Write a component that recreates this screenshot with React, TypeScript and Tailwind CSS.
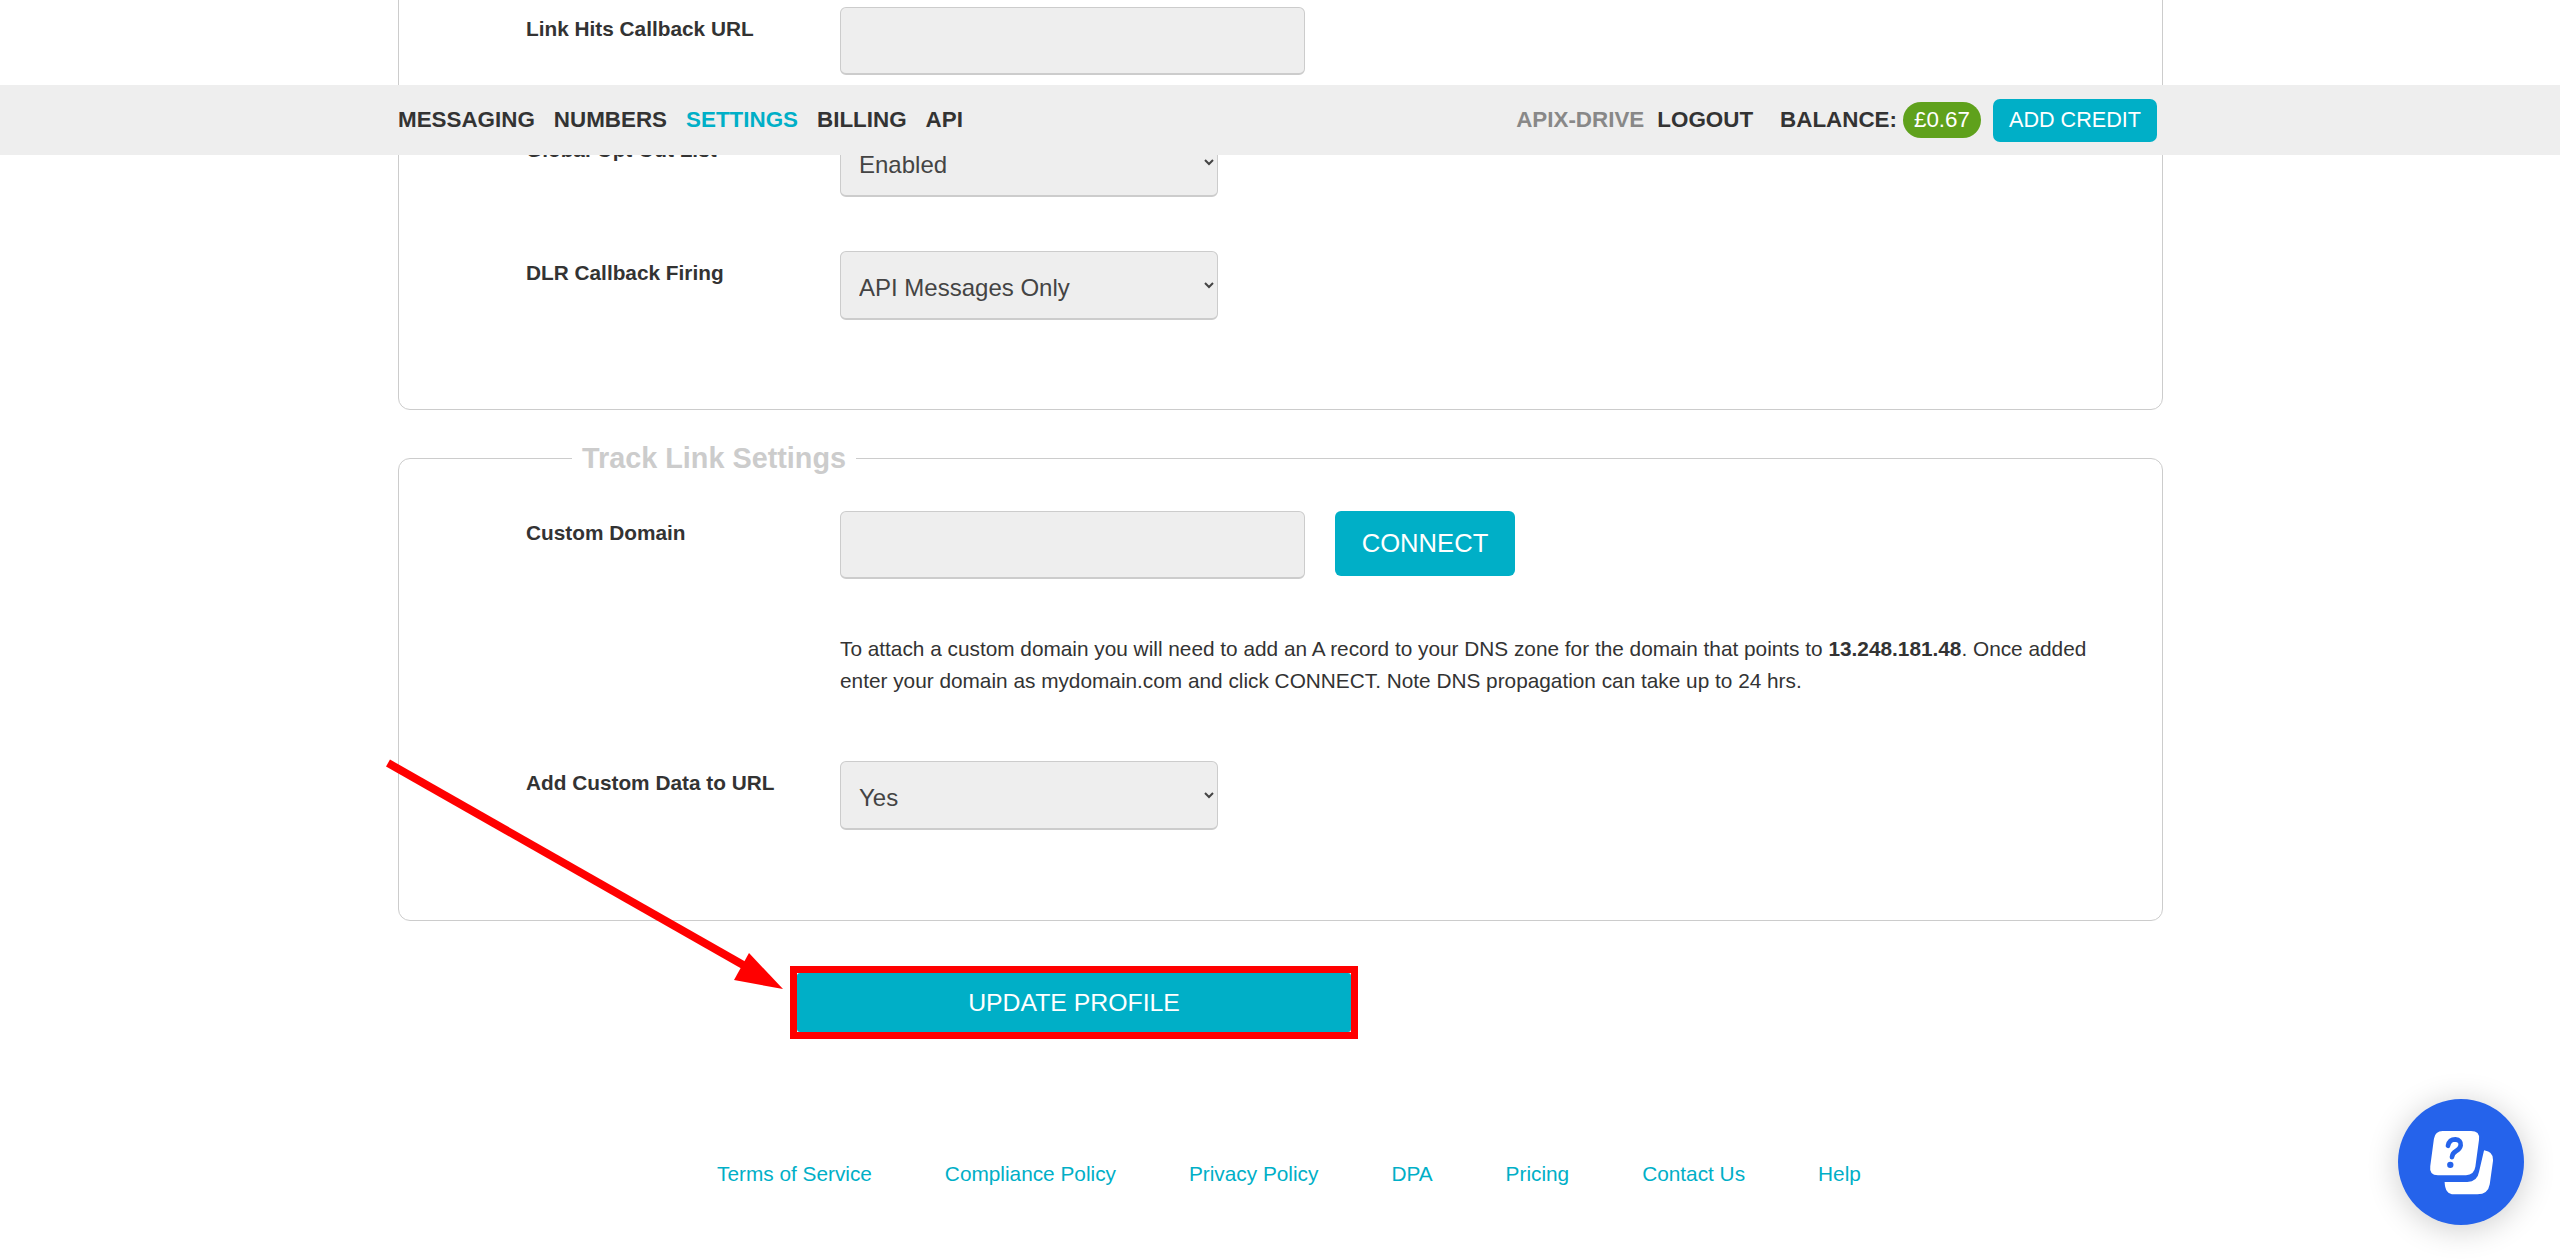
import React from "react";

const labelCls = "w-[314px] shrink-0 mt-[10px] text-[20.8px] leading-[24px] font-bold text-[#333333]";
const inputCls = "w-[465px] h-[68px] shrink-0 bg-[#eeeeee] border border-[#cccccc] border-b-2 rounded-[6px]";
const selectCls = "w-[378px] h-[69px] shrink-0 bg-[#eeeeee] border border-[#cccccc] border-b-2 rounded-[6px] pl-[14px] pr-[8px] pt-[4px] text-[24px] text-[#444444]";

function Chat() {
  return (
    <div className="fixed left-[2398px] top-[1099px] z-30 w-[126px] h-[126px] rounded-full bg-[#2563eb] shadow-[0_4px_32px_rgba(0,0,0,0.2)]">
      <svg width="126" height="126" viewBox="115 57 376 377">
        <path fill="#ffffff" d="M248 153 L333 153 Q360 153 357 178 L346 260 Q342 285 318 285 L234 285 Q207 285 211 258 L222 176 Q226 153 248 153 Z" />
        <path fill="#ffffff" d="M372 210 Q401 214 399 240 L389 312 Q384 342 352 342 L282 342 Q255 342 254 305 L322 305 Q352 305 357 275 Z" />
        <path fill="none" stroke="#2563eb" strokeWidth="14" strokeLinecap="round" d="M264 197 Q268 178 286 178 Q304 180 302 196 Q300 207 288 213 Q277 219 276 231" />
        <circle cx="271" cy="254" r="9.5" fill="#2563eb" />
      </svg>
    </div>
  );
}

export default function App() {
  return (
    <div className="relative w-[2560px] h-[1260px] overflow-hidden bg-white font-['Liberation_Sans',Arial,sans-serif] text-[#333333]">
      {/* fixed top navigation */}
      <nav className="fixed left-0 top-[85px] z-20 w-full h-[70px] bg-[#eeeeee] pl-[398px] pr-[403px] flex items-center justify-between">
        <div className="flex items-center gap-[19px] text-[22.4px] font-bold">
          <a>MESSAGING</a>
          <a>NUMBERS</a>
          <a className="text-[#00afc7]">SETTINGS</a>
          <a>BILLING</a>
          <a>API</a>
        </div>
        <div className="flex items-center text-[22.4px] font-bold">
          <a className="text-[#888888]">APIX-DRIVE</a>
          <a className="ml-[13px]">LOGOUT</a>
          <span className="ml-[27px]">BALANCE:</span>
          <span className="ml-[6px] w-[78px] h-[36px] rounded-full bg-[#5fa11c] text-white font-normal flex items-center justify-center">£0.67</span>
          <button className="ml-[12px] w-[164px] h-[43px] rounded-[7px] bg-[#00afc7] text-white font-normal text-[21.6px] flex items-center justify-center">ADD CREDIT</button>
        </div>
      </nav>

      <main className="w-[1765px] ml-[398px]">
        {/* first panel, scrolled partly out of view */}
        <section className="-mt-[60px] border border-[#cccccc] rounded-[12px] pl-[127px] pt-[66px] pb-[89px]">
          <div className="flex mb-[53px]">
            <label className={labelCls}>Link Hits Callback URL</label>
            <input className={inputCls} />
          </div>
          <div className="flex mb-[54px]">
            <label className={labelCls}>Global Opt Out List</label>
            <select className={selectCls}><option>Enabled</option></select>
          </div>
          <div className="flex">
            <label className={labelCls}>DLR Callback Firing</label>
            <select className={selectCls}><option>API Messages Only</option></select>
          </div>
        </section>

        {/* second panel */}
        <fieldset className="mt-[32px] border border-[#cccccc] rounded-[12px] pl-[127px] pb-[90px]">
          <legend className="-ml-[127px] ml-[46px] px-[10px] text-[28.8px] leading-[32px] font-bold text-[#cccccc]">Track Link Settings</legend>
          <div className="pt-[37px] flex">
            <label className={labelCls}>Custom Domain</label>
            <input className={inputCls} />
            <button className="ml-[30px] w-[180px] h-[65px] rounded-[6px] bg-[#00afc7] text-white text-[25.6px]">CONNECT</button>
          </div>
          <p className="mt-[54px] ml-[314px] w-[1260px] text-[20.8px] leading-[32px] text-[#333333]">
            To attach a custom domain you will need to add an A record to your DNS zone for the domain that points to <b>13.248.181.48</b>. Once added enter your domain as mydomain.com and click CONNECT. Note DNS propagation can take up to 24 hrs.
          </p>
          <div className="mt-[64px] flex">
            <label className={labelCls}>Add Custom Data to URL</label>
            <select className={selectCls}><option>Yes</option></select>
          </div>
        </fieldset>

        {/* update button with red highlight */}
        <div className="mt-[45px] ml-[392px] w-[568px] border-[7px] border-[#ff0000] bg-white">
          <button className="block w-full h-[59px] rounded-[3px] bg-[#00afc7] text-white text-[24.8px]">UPDATE PROFILE</button>
        </div>

        {/* footer links */}
        <footer className="mt-[123px] ml-[319px] flex gap-[73px] text-[20.8px] leading-[24px] text-[#00afc7]">
          <a>Terms of Service</a>
          <a>Compliance Policy</a>
          <a>Privacy Policy</a>
          <a>DPA</a>
          <a>Pricing</a>
          <a>Contact Us</a>
          <a>Help</a>
        </footer>
      </main>

      {/* annotation arrow */}
      <svg className="absolute left-[380px] top-[750px] z-10" width="420" height="250" viewBox="380 750 420 250">
        <line x1="388" y1="763" x2="752" y2="970" stroke="#ff0000" strokeWidth="8" />
        <polygon points="783,989 749,953 734,980" fill="#ff0000" />
      </svg>

      <Chat />
    </div>
  );
}
